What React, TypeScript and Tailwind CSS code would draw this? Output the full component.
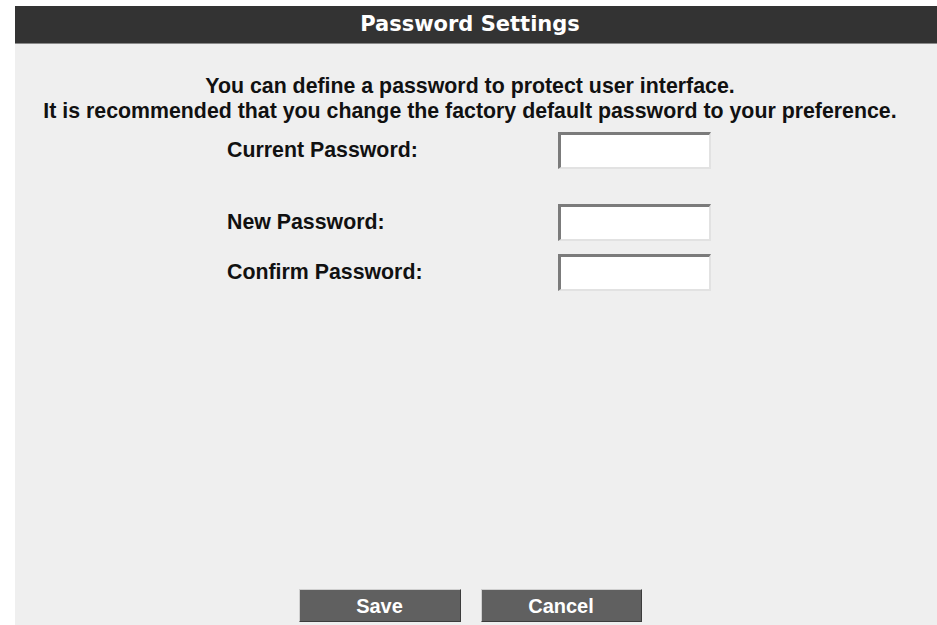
export default function App() {
  const fields = [
    { label: "Current Password:", gap: "mt-[9px]" },
    { label: "New Password:", gap: "mt-[35px]" },
    { label: "Confirm Password:", gap: "mt-[13px]" },
  ];

  return (
    <div className="min-h-screen bg-white pl-[15px] pt-[6px] overflow-hidden">
      <div className="min-h-[619px] bg-[#efefef] font-['Liberation_Sans',Arial,sans-serif]">
        {/* title bar */}
        <div className="h-[38px] bg-[#333333] border-b border-[#8a8a8a] pr-[12px] flex items-center justify-center">
          <h1 className="font-['DejaVu_Sans',Verdana,sans-serif] font-bold text-[21px] leading-none text-white">
            Password Settings
          </h1>
        </div>

        <div className="pr-[12px] pt-[30px] text-center font-bold text-[21.33px] leading-[24.5px] text-[#111111] whitespace-nowrap">
          <p>You can define a password to protect user interface.</p>
          <p>
            It is recommended that you change the factory default password to
            your preference.
          </p>
        </div>

        {fields.map((f) => (
          <div key={f.label} className={`${f.gap} ml-[212px] flex items-center h-[37px]`}>
            <label className="w-[331px] font-bold text-[21.33px] text-[#111111]">
              {f.label}
            </label>
            <input
              type="password"
              className="w-[153px] h-[37px] bg-white outline-none border-solid border-t-[3px] border-l-[3px] border-r-2 border-b-2 border-t-[#7b7b7b] border-l-[#7b7b7b] border-r-[#e2e2e2] border-b-[#e2e2e2]"
            />
          </div>
        ))}

        <div className="mt-[298px] pr-[12px] flex justify-center gap-[20px]">
          <button className="w-[162px] h-[33px] bg-[#606060] text-white font-bold text-[20px] leading-none border-solid border border-t-[#cfcfcf] border-l-[#cfcfcf] border-r-[#3c3c3c] border-b-[#3c3c3c]">
            Save
          </button>
          <button className="w-[161px] h-[33px] bg-[#606060] text-white font-bold text-[20px] leading-none border-solid border border-t-[#cfcfcf] border-l-[#cfcfcf] border-r-[#3c3c3c] border-b-[#3c3c3c]">
            Cancel
          </button>
        </div>
      </div>
    </div>
  );
}
